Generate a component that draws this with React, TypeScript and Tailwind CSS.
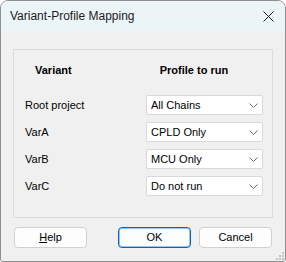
import { useState } from "react";

const rows = [
  { name: "Root project", profile: "All Chains" },
  { name: "VarA", profile: "CPLD Only" },
  { name: "VarB", profile: "MCU Only" },
  { name: "VarC", profile: "Do not run" },
];

function Chevron() {
  return (
    <svg width="9" height="5" viewBox="0 0 9 5" className="shrink-0">
      <path d="M0.5 0.5 L4.5 4.5 L8.5 0.5" fill="none" stroke="#6b6b6b" strokeWidth="1" />
    </svg>
  );
}

function Combo({ value }: { value: string }) {
  return (
    <div className="ml-auto flex h-[20px] w-[117px] items-center rounded-[2px] border border-[#d9d9d9] bg-white pl-[4px] pr-[4px]">
      <span className="flex-1 truncate text-[11px] leading-none text-black">{value}</span>
      <Chevron />
    </div>
  );
}

export default function App() {
  const [picked] = useState(rows);

  return (
    <div className="flex h-[262px] w-[286px] flex-col overflow-hidden rounded-t-[8px] rounded-b-[3px] border border-[#8f8f8f] bg-[#f0f0f0] font-['Liberation_Sans',Arial,sans-serif] text-black">
      {/* title bar */}
      <div className="flex h-[30px] shrink-0 items-center bg-[#ebf5f7] pl-[9px] pr-[10px]">
        <span className="text-[12px] leading-none text-[#1b1b1b]">Variant-Profile Mapping</span>
        <svg width="11" height="11" viewBox="0 0 11 11" className="ml-auto mr-[1px]">
          <path d="M0.5 0.5 L10.5 10.5 M10.5 0.5 L0.5 10.5" stroke="#1c1c1c" strokeWidth="1" />
        </svg>
      </div>

      <div className="relative flex flex-1 flex-col px-[12px] pt-[18px]">
        {/* group */}
        <div className="flex h-[169px] flex-col border border-[#dcdcdc] pl-[11px] pr-[9px] pt-[13px]">
          <div className="flex h-[14px] items-center text-[11px] font-bold">
            <span className="ml-[10px]">Variant</span>
            <span className="ml-[88px]">Profile to run</span>
          </div>
          <div className="mt-[18px] flex flex-col gap-[7px]">
            {picked.map((r) => (
              <div key={r.name} className="flex h-[20px] items-center">
                <span className="text-[11px] leading-none">{r.name}</span>
                <Combo value={r.profile} />
              </div>
            ))}
          </div>
        </div>

        {/* buttons */}
        <div className="mt-[9px] flex pl-[1px]">
          <button className="flex h-[21px] w-[73px] items-center justify-center rounded-[4px] border border-[#d0d0d0] bg-[#fdfdfd] text-[11px]">
            <span><span className="underline">H</span>elp</span>
          </button>
          <button className="ml-[31px] flex h-[21px] w-[73px] items-center justify-center rounded-[4px] border border-[#0067c0] bg-[#fdfdfd] text-[11px] shadow-[inset_0_0_0_1px_#9cc3e8]">
            OK
          </button>
          <button className="ml-[8px] flex h-[21px] w-[73px] items-center justify-center rounded-[4px] border border-[#d0d0d0] bg-[#fdfdfd] text-[11px]">
            Cancel
          </button>
        </div>

        {/* size grip */}
        <svg width="8" height="8" viewBox="0 0 8 8" className="absolute bottom-[1px] right-[1px]">
          {[
            [6, 0], [6, 3], [3, 3], [6, 6], [3, 6], [0, 6],
          ].map(([x, y]) => (
            <rect key={`${x}-${y}`} x={x} y={y} width="2" height="2" fill="#c4c4c4" />
          ))}
        </svg>
      </div>
    </div>
  );
}
